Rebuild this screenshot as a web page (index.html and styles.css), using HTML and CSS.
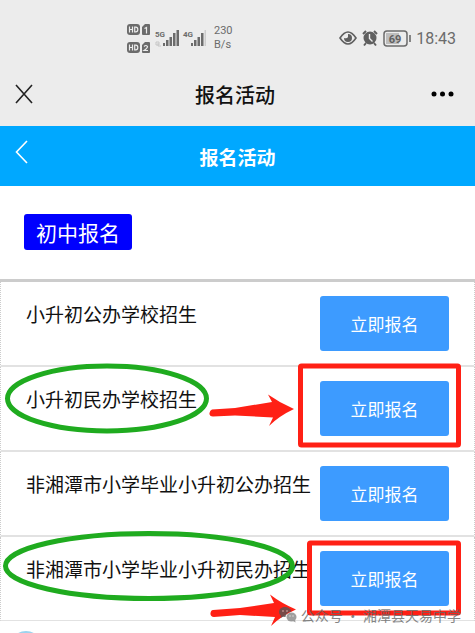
FILE: index.html
```html
<!DOCTYPE html>
<html lang="zh-CN">
<head>
    <meta charset="UTF-8">
    <meta name="viewport" content="width=device-width, initial-scale=1.0">
    <title>报名活动</title>
    <link rel="stylesheet" href="styles.css">
</head>
<body>

    <div class="status-bar">
        <div class="status-left">
            <svg width="80" height="32" viewBox="0 0 80 32">
                <!-- HD badges and SIM cards -->
                <g fill="#6b6b6b">
                    <rect x="1" y="2" width="13" height="11" rx="3"/>
                    <path d="M19 2h4q1 0 1 1v9q0 1-1 1h-6q-1 0-1-1V5z"/>
                    <rect x="1" y="20" width="13" height="11" rx="3"/>
                    <path d="M19 20h4q1 0 1 1v9q0 1-1 1h-6q-1 0-1-1v-7z"/>
                </g>
                <g fill="none" stroke="#ececec" stroke-width="1.2">
                    <path d="M3.5 4.5v6M6.5 4.5v6M3.5 7.5h3M8.7 5.1v4.8h1.1q2 0 2-2.4t-2-2.4z"/>
                    <path d="M3.5 22.5v6M6.5 22.5v6M3.5 25.5h3M8.7 23.1v4.8h1.1q2 0 2-2.4t-2-2.4z"/>
                    <path d="M18.5 6.5l2-1v6M18 24.5q2-2 3.5 0 0 1.5-3.5 4h4"/>
                </g>
                <text class="signal-label" x="29" y="15">5G</text>
                <text class="signal-label" x="57" y="15">4G</text>
                <path d="M30 20h3v3h-3zM32 21v3h3" fill="none" stroke="#c6c6c6"/>
                <g fill="#6b6b6b">
                    <path d="M37 21h2v3h-2zM40 18h2.5v6H40zM43.5 15H46v9h-2.500zM47 11h2.500v13H47zM50.500 8H53v16h-2.500z"/>
                    <path d="M65 21h2v3h-2zM68 18h2.500v6H68zM71.500 15H74v9h-2.500zM75 11h2.500v13H75z"/>
                    <path d="M78.500 8H80v16h-1.500z" fill="#cdcdcd"/>
                </g>
            </svg>
            <div class="net-speed">230<br>B/s</div>
        </div>
        <div class="status-right">
            <svg width="18" height="16" viewBox="0 0 18 16">
                <path d="M1 8q8-12 16 0-8 12-16 0z" fill="none" stroke="#5f5f5f" stroke-width="1.6"/>
                <path d="M9 4a4 4 0 1 1-4 4q3 1 4-1z" fill="#5f5f5f"/>
            </svg>
            <svg width="16" height="18" viewBox="0 0 16 18">
                <circle cx="8" cy="9" r="6.5" fill="#5f5f5f"/>
                <path d="M1 5l3-3M15 5l-3-3M4 14l-2 2.5M12 14l2 2.5" stroke="#5f5f5f" stroke-width="2" fill="none"/>
                <path d="M7.5 5v4.5l3 3" stroke="#ececec" stroke-width="1.4" fill="none"/>
            </svg>
            <svg width="28" height="18" viewBox="0 0 28 18">
                <rect x="1" y="2" width="23" height="15" rx="3" fill="none" stroke="#6b6b6b" stroke-width="1.5"/>
                <rect x="3" y="4" width="13" height="11" fill="#bdbdbd"/>
                <text class="battery-label" x="12" y="14">69</text>
                <path d="M27 6v7" stroke="#6b6b6b" stroke-width="1.6"/>
            </svg>
            <span class="clock">18:43</span>
        </div>
    </div>

    <div class="nav-bar">
        <button class="icon-button" aria-label="关闭">
            <svg width="18" height="20" viewBox="0 0 18 20">
                <path d="M1 1l16 18M17 1L1 19" stroke="#222" stroke-width="1.6" fill="none"/>
            </svg>
        </button>
        <div class="nav-title">报名活动</div>
        <button class="icon-button icon-button-more" aria-label="更多">
            <svg width="24" height="6" viewBox="0 0 24 6">
                <circle cx="3" cy="3" r="2.5"/>
                <circle cx="11.5" cy="3" r="2.5"/>
                <circle cx="20" cy="3" r="2.5"/>
            </svg>
        </button>
    </div>

    <header class="page-header">
        <button class="icon-button" aria-label="返回">
            <svg width="14" height="24" viewBox="0 0 14 24">
                <path d="M12 1L1.5 12 12 23" stroke="#fff" stroke-width="1.6" fill="none"/>
            </svg>
        </button>
        <h1>报名活动</h1>
    </header>

    <section class="category">
        <span class="category-tag">初中报名</span>
    </section>

    <ul class="enroll-list">
        <li class="enroll-item">
            <span class="enroll-name">小升初公办学校招生</span>
            <button class="enroll-button">立即报名</button>
        </li>
        <li class="enroll-item">
            <span class="enroll-name">小升初民办学校招生</span>
            <button class="enroll-button">立即报名</button>
            <svg class="mark mark-left" width="212" height="76" viewBox="0 0 212 76">
                <ellipse cx="106" cy="37.5" rx="99.5" ry="32.5" fill="none" stroke="#1fab1f" stroke-width="5"/>
            </svg>
            <svg class="mark mark-right" width="275" height="90" viewBox="200 361 275 90">
                <rect x="300.5" y="366" width="158" height="79" rx="1" fill="none" stroke="#ff2015" stroke-width="5"/>
                <path d="M212 409.5L235 408 272 402 268 394.500Q280 403 294 409 279 416 269 426L273 417.500 235 415.500 213 416.500Q209 416 209.500 413 210 410 212 409.500z" fill="#ff2015"/>
            </svg>
        </li>
        <li class="enroll-item">
            <span class="enroll-name">非湘潭市小学毕业小升初公办招生</span>
            <button class="enroll-button">立即报名</button>
        </li>
        <li class="enroll-item">
            <span class="enroll-name">非湘潭市小学毕业小升初民办招生</span>
            <button class="enroll-button">立即报名</button>
            <svg class="mark mark-left" width="300" height="76" viewBox="0 0 300 76">
                <ellipse cx="148" cy="35" rx="143.5" ry="32.5" fill="none" stroke="#1fab1f" stroke-width="5"/>
            </svg>
            <svg class="mark mark-right" width="275" height="100" viewBox="200 532 275 100">
                <rect x="309.5" y="544" width="149" height="70" rx="1" fill="none" stroke="#ff2015" stroke-width="5"/>
                <path d="M213 611L240 609 274 604 270 595.500Q281 604 296 610.500 281 617 271 627L275 618 240 616 214 618Q210 617.500 210.500 614 211 611 213 611z" fill="#ff2015"/>
            </svg>
            <div class="watermark">
                <svg width="18" height="16" viewBox="0 0 18 16">
                    <path d="M6 0C2 0 0 2.5 0 5q0 2.5 2 4l-.5 2 2.500-1.300q1 .3 2.500.3Q7 5 12.500 4.500 11 0 6 0z" fill="#555"/>
                    <ellipse cx="12.500" cy="10" rx="5" ry="4.500" fill="#888"/>
                    <path d="M14 14l2.500 1.500L16 12z" fill="#888"/>
                    <g fill="#ddd"><circle cx="4" cy="4" r=".8"/><circle cx="8" cy="4" r=".8"/><circle cx="11" cy="9" r=".7"/><circle cx="14" cy="9" r=".7"/></g>
                </svg>
                <span>公众号 · 湘潭县天易中学</span>
            </div>
        </li>
    </ul>

    <!-- top edge of the next round icon -->
    <div class="next-section">
        <svg width="32" height="2" viewBox="0 0 32 2">
            <circle cx="16" cy="16" r="15" fill="none" stroke="#9bd3ee" stroke-width="2"/>
        </svg>
    </div>

</body>
</html>
```

FILE: styles.css
```css
* {
    box-sizing: border-box;
}

body {
    margin: 0;
    background-color: #fff;
    color: #111;
    font-family: "Noto Sans CJK SC", sans-serif;
}

button {
    padding: 0;
    border: none;
    background: none;
    font-family: inherit;
    cursor: pointer;
}

svg {
    display: block;
    flex-shrink: 0;
}

/* phone status bar */
.status-bar {
    display: flex;
    justify-content: space-between;
    align-items: center;
    height: 62px;
    padding: 14px 19px 0 126px;
    background-color: #ececec;
    color: #6b6b6b;
    font-family: Roboto, sans-serif;
}

.status-left,
.status-right {
    display: flex;
    align-items: center;
}

.status-left {
    gap: 8px;
}

.status-right {
    gap: 5px;
}

.signal-label {
    font-size: 8px;
    font-weight: bold;
    fill: #6b6b6b;
}

.battery-label {
    font-size: 11px;
    font-weight: bold;
    text-anchor: middle;
    fill: #5f5f5f;
}

.net-speed {
    font-size: 11px;
    line-height: 14px;
}

.clock {
    font-size: 16px;
}

.nav-bar {
    display: grid;
    grid-template-columns: 24px 1fr 24px;
    align-items: center;
    height: 64px;
    padding: 0 20px 0 15px;
    background-color: #ececec;
}

.nav-title {
    font-size: 20px;
    font-weight: 500;
    text-align: center;
}

.page-header {
    display: grid;
    grid-template-columns: 14px 1fr 14px;
    align-items: center;
    height: 60px;
    padding: 0 15px;
    background-color: #00a8ff;
    color: #fff;
}

.page-header .icon-button {
    padding-bottom: 8px;
}

.page-header h1 {
    margin: 0;
    font-size: 19px;
    font-weight: bold;
    text-align: center;
}

.category {
    padding: 28px 24px 29px;
    border-bottom: 3px solid #ccc;
}

.category-tag {
    display: block;
    width: fit-content;
    padding: 0 12px;
    border-radius: 3px;
    background-color: #0000fe;
    color: #fff;
    font-size: 21px;
    line-height: 36px;
}

.enroll-list {
    margin: 0;
    padding: 0;
    list-style: none;
}

.enroll-item {
    position: relative;
    display: flex;
    justify-content: space-between;
    align-items: flex-start;
    padding: 14px 25px;
    border: 1px dotted #ccc;
    border-top: none;
    border-bottom: 2px solid #e2e2e2;
}

.enroll-item:last-child {
    border-bottom-width: 1px;
}

.enroll-name {
    font-size: 19px;
    line-height: 36px;
    white-space: nowrap;
}

.enroll-button {
    flex-shrink: 0;
    width: 129px;
    height: 55px;
    border-radius: 3px;
    background-color: #3d9bff;
    color: #fff;
    font-size: 17px;
}

/* hand drawn marks over the rows */
.mark {
    position: absolute;
    top: -6px;
    pointer-events: none;
}

.mark-left {
    left: 0;
}

.mark-right {
    right: -1px;
}

.watermark {
    position: absolute;
    right: 13px;
    bottom: -5px;
    display: flex;
    align-items: center;
    gap: 4px;
    color: #666;
    font-size: 14px;
    line-height: 20px;
    white-space: nowrap;
    opacity: 0.8;
}

.next-section {
    padding: 10px 10px 0;
}
```
